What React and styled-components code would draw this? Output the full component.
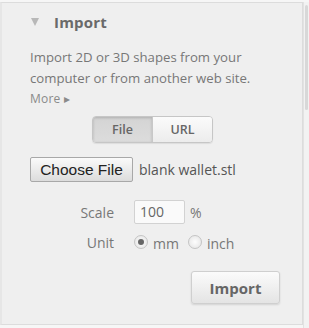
import React from "react";
import styled, { createGlobalStyle } from "styled-components";

const Global = createGlobalStyle`
  html, body { margin: 0; padding: 0; background: #f6f6f6; }
  body { font-family: "Open Sans", "Liberation Sans", sans-serif; }
`;

function App() {
  return (
    <>
      <Global />
      <Page>
        <Panel>
          <Header>
            <Caret />
            <span>Import</span>
          </Header>
          <Desc>
            Import 2D or 3D shapes from your computer or from another web site.
          </Desc>
          <More>More ▸</More>
          <TabRow>
            <Tabs>
              <Tab active>File</Tab>
              <Tab>URL</Tab>
            </Tabs>
          </TabRow>
          <FileRow>
            <ChooseBtn>Choose File</ChooseBtn>
            <FileName>blank wallet.stl</FileName>
          </FileRow>
          <FieldRow>
            <Label>Scale</Label>
            <NumInput>100</NumInput>
            <Unit>%</Unit>
          </FieldRow>
          <FieldRow tight>
            <Label>Unit</Label>
            <Radio checked />
            <RadioText>mm</RadioText>
            <Radio />
            <RadioText>inch</RadioText>
          </FieldRow>
          <Footer>
            <ImportBtn>Import</ImportBtn>
          </Footer>
        </Panel>
        <Scroll>
          <Thumb />
        </Scroll>
      </Page>
    </>
  );
}

const Page = styled.div`
  width: 309px;
  height: 328px;
  display: flex;
  padding-top: 2px;
  box-sizing: border-box;
`;

const Panel = styled.div`
  flex: 1;
  height: 323px;
  box-sizing: border-box;
  border: 1px solid #dcdcdc;
  border-left: 2px solid #e6e6e6;
  background: #efefef;
  padding: 7px 0 0 28px;
  color: #777;
`;

const Header = styled.div`
  display: flex;
  align-items: center;
  gap: 15px;
  height: 24px;
  font-size: 15px;
  font-weight: 700;
  color: #6a6a6a;
  span { letter-spacing: 0.2px; }
`;

const Caret = styled.i`
  width: 0;
  height: 0;
  border-left: 4px solid transparent;
  border-right: 4px solid transparent;
  border-top: 8px solid #b8b8b8;
  margin-left: 1px;
`;

const Desc = styled.div`
  margin-top: 13px;
  width: 250px;
  font-size: 13.2px;
  line-height: 21px;
  color: #777;
`;

const More = styled.div`
  margin-top: 1px;
  font-size: 12px;
  line-height: 17px;
  color: #8a8a8a;
  letter-spacing: 0.2px;
`;

const TabRow = styled.div`
  display: flex;
  padding-left: 62px;
  margin-top: 9px;
`;

const Tabs = styled.div`
  display: flex;
  border: 1px solid #c6c6c6;
  border-radius: 4px;
  overflow: hidden;
  box-shadow: 0 1px 1px rgba(0, 0, 0, 0.08);
`;

const Tab = styled.div`
  width: ${(p) => (p.active ? 59 : 59)}px;
  height: 25px;
  display: flex;
  align-items: center;
  justify-content: center;
  font-size: 12.5px;
  font-weight: 600;
  color: #666;
  background: ${(p) =>
    p.active
      ? "linear-gradient(#d4d4d4, #dcdcdc)"
      : "linear-gradient(#fbfbfb, #ececec)"};
  box-shadow: ${(p) => (p.active ? "inset 0 1px 3px rgba(0,0,0,0.18)" : "none")};
  & + & { border-left: 1px solid #c8c8c8; }
`;

const FileRow = styled.div`
  display: flex;
  align-items: center;
  gap: 6px;
  margin-top: 14px;
`;

const ChooseBtn = styled.div`
  height: 25px;
  width: 103px;
  display: flex;
  align-items: center;
  justify-content: center;
  box-sizing: border-box;
  border: 1px solid #a8a8a8;
  border-radius: 2px;
  background: linear-gradient(#fafafa, #dcdcdc);
  font-family: "Liberation Sans", Arial, sans-serif;
  font-size: 15.5px;
  color: #222;
`;

const FileName = styled.div`
  font-size: 14px;
  color: #555;
`;

const FieldRow = styled.div`
  display: flex;
  align-items: center;
  margin-top: ${(p) => (p.tight ? 6 : 18)}px;
  height: 24px;
`;

const Label = styled.div`
  width: 104px;
  padding-right: 20px;
  box-sizing: border-box;
  text-align: right;
  font-size: 14px;
  color: #777;
`;

const NumInput = styled.div`
  width: 51px;
  height: 24px;
  box-sizing: border-box;
  border: 1px solid #d2d2d2;
  border-radius: 2px;
  background: #fafafa;
  padding-left: 5px;
  font-size: 14px;
  line-height: 22px;
  color: #666;
`;

const Unit = styled.span`
  margin-left: 5px;
  font-size: 14px;
  color: #777;
`;

const Radio = styled.span`
  width: 14px;
  height: 14px;
  box-sizing: border-box;
  border-radius: 50%;
  border: 1px solid #c4c4c4;
  background: radial-gradient(circle, #fdfdfd, #e2e2e2);
  display: flex;
  align-items: center;
  justify-content: center;
  margin-right: 5px;
  &::after {
    content: "";
    width: 6px;
    height: 6px;
    border-radius: 50%;
    background: ${(p) => (p.checked ? "#666" : "transparent")};
  }
`;

const RadioText = styled.span`
  font-size: 14px;
  color: #777;
  margin-right: 9px;
  margin-top: 3px;
`;

const Footer = styled.div`
  display: flex;
  justify-content: flex-end;
  padding-right: 22px;
  margin-top: 17px;
`;

const ImportBtn = styled.div`
  width: 89px;
  height: 33px;
  box-sizing: border-box;
  border: 1px solid #cfcfcf;
  border-radius: 3px;
  background: linear-gradient(#fbfbfb, #e4e4e4);
  box-shadow: 0 1px 2px rgba(0, 0, 0, 0.12);
  display: flex;
  align-items: center;
  justify-content: center;
  font-size: 15px;
  font-weight: 700;
  color: #666;
`;

const Scroll = styled.div`
  width: 5px;
  height: 326px;
  background: #f2f2f2;
  border-left: 1px solid #e2e2e2;
`;

const Thumb = styled.div`
  width: 3px;
  height: 105px;
  margin: 3px 0 0 1px;
  background: #d8d8d8;
  border-radius: 2px;
`;

export default App;
